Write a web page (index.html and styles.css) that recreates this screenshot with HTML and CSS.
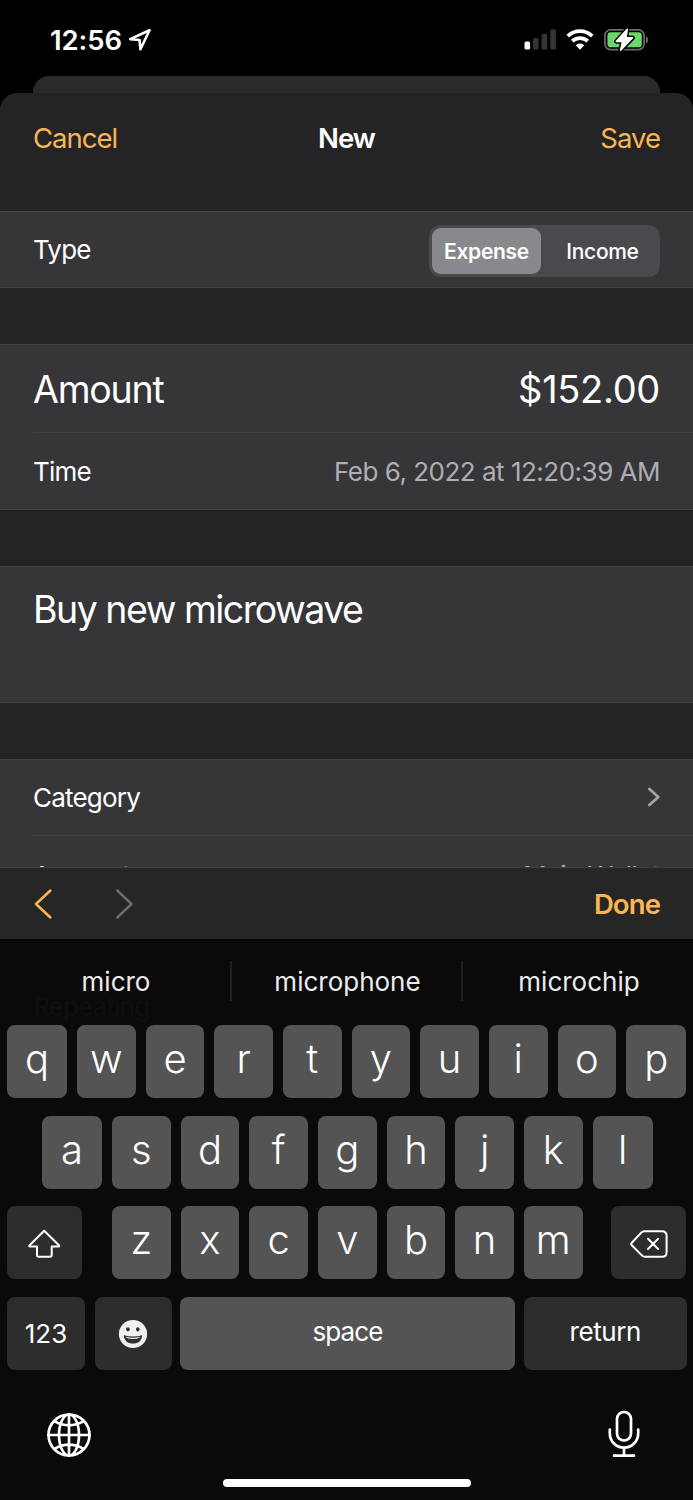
FILE: index.html
```
<!doctype html>
<html lang="en">
<head>
  <meta charset="UTF-8">
  <meta name="viewport" content="width=device-width, initial-scale=1">
  <title>New</title>
  <link rel="stylesheet" href="styles.css">
</head>
<body>
  <header class="status">
    <span class="clock">12:56</span>
    <svg class="location" width="24" height="24" viewBox="0 0 24 24"><path d="M21.5 2.2 2.2 11.1 11.6 12 12.4 21.3Z"/></svg>
    <svg class="signal" width="32" height="22" viewBox="0 0 32 22">
      <rect class="on" x="0.5" y="12.5" width="5.6" height="8"/>
      <rect x="9" y="9" width="5.6" height="11.5"/>
      <rect x="17.6" y="4.7" width="5.6" height="15.8"/>
      <rect x="26.3" y="0.3" width="5.6" height="20.2"/>
    </svg>
    <svg class="wifi" width="28" height="22" viewBox="0 0 28 22">
      <path d="M1.8 7.2a17.4 17.4 0 0 1 24.4 0"/>
      <path d="M6.3 12.2a11 11 0 0 1 15.4 0"/>
      <path class="dot" d="M9.7 16.3a6.2 6.2 0 0 1 8.6 0L14 20.7Z"/>
    </svg>
    <svg class="battery" width="45" height="24" viewBox="0 0 45 24">
      <rect class="shell" x="0.9" y="1.9" width="39.2" height="19.7" rx="5.6"/>
      <path class="cap" d="M42 8.3c2.8 1 2.8 6.2 0 7.2Z"/>
      <rect class="charge" x="3.4" y="4.3" width="34.4" height="15" rx="3.4"/>
      <path class="edge" d="M23.2 1.2 12.4 13.4H18.6L16.6 22.2 28.6 9.8H22Z"/>
      <path class="bolt" d="M23.2 1.2 12.4 13.4H18.6L16.6 22.2 28.6 9.8H22Z"/>
    </svg>
  </header>

  <div class="backcard"></div>

  <main class="sheet">
    <nav class="bar">
      <span class="link cancel">Cancel</span>
      <span class="title">New</span>
      <span class="link save">Save</span>
    </nav>

    <section class="group">
      <div class="row">
        <span class="label">Type</span>
        <div class="segment">
          <span class="item active">Expense</span>
          <span class="item">Income</span>
        </div>
      </div>
    </section>

    <section class="group">
      <div class="row big">
        <span class="amount">Amount</span>
        <span class="money">$152.00</span>
      </div>
      <div class="row line">
        <span class="label">Time</span>
        <span class="value">Feb 6, 2022 at 12:20:39 AM</span>
      </div>
    </section>

    <section class="group">
      <p class="note">Buy new microwave</p>
    </section>

    <section class="group last">
      <div class="row">
        <span class="label">Category</span>
        <svg class="chevron" width="14" height="20" viewBox="0 0 14 20"><path d="M3.4 2 12.3 10 3.4 18"/></svg>
      </div>
      <div class="row line account">
        <span class="label">Account</span>
        <span class="value">Main Wallet</span>
      </div>
    </section>
  </main>

  <div class="tools">
    <svg class="prev" width="20" height="32" viewBox="0 0 20 32"><path d="M17.4 2.5 3 16 17.4 29.5"/></svg>
    <svg class="next" width="20" height="32" viewBox="0 0 20 32"><path d="M3.2 2.5 17.5 16 3.2 29.5"/></svg>
    <span class="done">Done</span>
  </div>

  <footer class="keyboard">
    <!-- row of the form that shines through the keyboard -->
    <div class="ghost"><span>Repeating</span><i></i></div>

    <div class="words">
      <span>micro</span>
      <span>microphone</span>
      <span>microchip</span>
    </div>

    <div class="keys row1">
      <b>q</b><b>w</b><b>e</b><b>r</b><b>t</b><b>y</b><b>u</b><b>i</b><b>o</b><b>p</b>
    </div>
    <div class="keys row2">
      <b>a</b><b>s</b><b>d</b><b>f</b><b>g</b><b>h</b><b>j</b><b>k</b><b>l</b>
    </div>
    <div class="keys row3">
      <b class="dark shift">
        <svg width="34" height="30" viewBox="0 0 34 30"><path d="M16.2 1.8 1.6 16.2c-.7.8-.4 1.3.5 1.3H9V26q0 1.7 1.7 1.7H22q1.7 0 1.7-1.7V17.5h6.7c1 0 1.3-.5.5-1.3Z"/></svg>
      </b>
      <b>z</b><b>x</b><b>c</b><b>v</b><b>b</b><b>n</b><b class="lastkey">m</b>
      <b class="dark delete">
        <svg width="38" height="28" viewBox="0 0 38 28"><path d="M14.1 1.2H32q4.6 0 4.6 4.6V22.2q0 4.6-4.6 4.6H15q-1.7 0-2.9-1.2L1.8 15.3q-1.3-1.3 0-2.6L11.5 2.4q.9-1.2 2.6-1.2M18 8.8 28.2 19M28.2 8.8 18 19"/></svg>
      </b>
    </div>
    <div class="keys row4">
      <b class="dark text">123</b>
      <b class="dark emoji">
        <svg width="30" height="30" viewBox="0 0 30 30">
          <circle class="face" cx="15" cy="15" r="14.1"/>
          <ellipse cx="10" cy="10.3" rx="1.8" ry="2.1"/>
          <ellipse cx="19.8" cy="10.3" rx="1.8" ry="2.1"/>
          <path d="M5.9 16.2Q15 18.8 24.1 16.2C24 21.5 20 24.6 15 24.6S6 21.5 5.9 16.2Z"/>
          <path class="face" d="M7.6 17.8Q15 19.7 22.4 17.8C21.3 20.8 8.7 20.8 7.6 17.8Z"/>
        </svg>
      </b>
      <b class="text space">space</b>
      <b class="dark text return">return</b>
    </div>

    <div class="bottom">
      <svg class="globe" width="46" height="46" viewBox="0 0 46 46">
        <circle cx="23" cy="23" r="20.5"/>
        <ellipse cx="23" cy="23" rx="10" ry="20.5"/>
        <path d="M23 2.5V43.5M2.5 23H43.5M8.3 9.2Q23 17.6 37.7 9.2M8.3 36.8Q23 28.4 37.7 36.8"/>
      </svg>
      <svg class="mic" width="32" height="48" viewBox="0 0 32 48">
        <rect x="9" y="2" width="14" height="28.5" rx="7"/>
        <path d="M1.8 19.5V23.5a14.2 14.2 0 0 0 28.4 0V19.5M16 37.7V45.5M6 45.7H26"/>
      </svg>
    </div>
    <div class="home"></div>
  </footer>
</body>
</html>
```

FILE: styles.css
```
*{
  box-sizing: border-box;
  margin: 0;
  padding: 0;
}
body{
  width: 693px;
  height: 1500px;
  overflow: hidden;
  background: #000;
  color: #fff;
  font-family: Inter, "Liberation Sans", sans-serif;
  font-size: 26px;
}
svg{
  display: block;
  fill: none;
  stroke-linecap: round;
  stroke-linejoin: round;
}

/* status bar */
.status{
  height: 76px;
  display: flex;
  align-items: center;
  padding: 3px 44px 0 50px;
}
.clock{
  font-size: 27.5px;
  font-weight: 600;
  letter-spacing: -0.1px;
}
.location{
  margin-left: 6px;
  stroke: #fff;
  stroke-width: 2.6;
}
.signal{
  margin-left: auto;
  fill: #343434;
}
.signal rect{
  rx: 1.6px;
}
.signal .on{
  fill: #fff;
}
.wifi{
  margin-left: 10px;
  stroke: #fff;
  stroke-width: 3.8;
  stroke-linecap: butt;
}
.wifi .dot{
  fill: #fff;
  stroke: none;
}
.battery{
  margin-left: 10px;
}
.shell{
  stroke: #6b6b6b;
  stroke-width: 1.7;
}
.cap{
  fill: #6b6b6b;
}
.charge{
  fill: #6bd669;
}
.edge{
  stroke: #000;
  stroke-width: 4.6;
}
.bolt{
  fill: #fff;
  stroke: #fff;
  stroke-width: 1.6;
}

/* sheet */
.backcard{
  height: 17px;
  margin: 0 33px;
  border-radius: 16px 16px 0 0;
  background: #2a2a2c;
}
.sheet{
  height: 774px;
  overflow: hidden;
  border-radius: 17px 17px 0 0;
  background: #242426;
}
.bar{
  height: 118px;
  display: grid;
  grid-template-columns: 1fr 1fr 1fr;
  padding: 28px 33px 0;
  font-size: 27.5px;
  line-height: 34px;
  letter-spacing: -1px;
}
.link{
  color: #f9b653;
}
.title{
  text-align: center;
  font-weight: 600;
}
.save{
  text-align: right;
}
.group{
  margin-bottom: 56px;
  border-top: 1px solid #424244;
  border-bottom: 1px solid #424244;
  background: #363638;
}
.row{
  height: 75px;
  display: flex;
  align-items: center;
  justify-content: space-between;
  padding-right: 33px;
  margin-left: 33px;
}
.line{
  height: 77px;
  border-top: 1px solid #3f3f41;
}
.account{
  height: 79px;
}
.big{
  height: 87px;
}
.label{
  letter-spacing: -0.8px;
}
.amount{
  padding-top: 2px;
  font-size: 37.5px;
  letter-spacing: -1.2px;
}
.money{
  font-size: 38px;
  letter-spacing: -0.3px;
}
.value{
  color: #aeaeb4;
  letter-spacing: -0.5px;
}
.segment{
  width: 231px;
  height: 52px;
  display: grid;
  grid-template-columns: 109px 1fr;
  padding: 3px;
  margin-top: 2px;
  border-radius: 12px;
  background: #4a4a4e;
  font-size: 21px;
  letter-spacing: -0.3px;
}
.item{
  display: flex;
  align-items: center;
  justify-content: center;
  padding-left: 7px;
  padding-top: 1px;
  border-radius: 9px;
  font-weight: 500;
}
.active{
  padding-left: 0;
  background: #89888d;
  font-weight: 600;
}
.note{
  height: 135px;
  padding: 19px 33px;
  font-size: 37.5px;
  line-height: 48px;
  letter-spacing: -1.5px;
}
.chevron{
  margin-bottom: 2px;
  stroke: #a3a3a7;
  stroke-width: 2.8;
}

/* toolbar above keyboard */
.tools{
  height: 72px;
  display: flex;
  align-items: center;
  padding: 0 33px;
  border-top: 1px solid #3e3e40;
  background: #262626;
}
.prev{
  stroke: #f9b653;
  stroke-width: 2.5;
}
.next{
  margin-left: 61px;
  stroke: #6b6b6b;
  stroke-width: 2.5;
}
.done{
  margin-left: auto;
  color: #f9b653;
  font-size: 27.5px;
  font-weight: 600;
  letter-spacing: -0.9px;
}

/* keyboard */
.keyboard{
  position: relative;
  height: 561px;
  background: #0a0a0a;
}
.ghost{
  position: absolute;
  top: 45px;
  left: 33px;
  right: 33px;
  display: flex;
  align-items: center;
  justify-content: space-between;
  color: #0f0f0f;
  letter-spacing: -0.8px;
}
.ghost i{
  width: 80px;
  height: 44px;
  border-radius: 22px;
  background: #0b0b0b;
}
.words{
  position: relative;
  height: 86px;
  display: grid;
  grid-template-columns: 230px 231px 232px;
  padding: 22px 0 24px;
  color: #ececec;
}
.words span{
  display: flex;
  align-items: center;
  justify-content: center;
  padding-left: 2px;
}
.words span + span{
  border-left: 2px solid #202020;
}
.keys{
  position: relative;
  display: grid;
  column-gap: 9.97px;
  height: 73px;
  margin: 0 6.5px 17.7px 7px;
}
.row1{
  grid-template-columns: 60px repeat(8, 58.7px) 60px;
}
.row2{
  grid-template-columns: 60px repeat(7, 58.7px) 60px;
  margin-left: 42px;
}
.row3{
  grid-template-columns: 95px repeat(6, 58.7px) 77px 75.5px;
}
.row4{
  grid-template-columns: 78px 77px 335px 162.5px;
  column-gap: 9px;
}
.keys b{
  display: flex;
  align-items: center;
  justify-content: center;
  padding-bottom: 6px;
  border-radius: 8px;
  background: #545454;
  font-size: 40px;
  font-weight: 300;
}
.keys .dark{
  padding-bottom: 0;
  background: #2d2d2d;
}
.keys .text{
  font-size: 26px;
  font-weight: 400;
}
.keys .shift{
  width: 75px;
}
.keys .lastkey{
  width: 58.7px;
}
.keys .emoji{
  margin: 0 -0.5px 0 1px;
}
.keys .space{
  padding-bottom: 5px;
  letter-spacing: -0.9px;
}
.keys .return{
  padding-bottom: 4px;
  letter-spacing: -0.4px;
}
.emoji .face{
  fill: #f0f0f0;
}
.emoji svg{
  fill: #2d2d2d;
}
.shift svg,
.delete svg{
  margin-top: 2px;
  stroke: #fff;
  stroke-width: 2;
}
.bottom{
  display: flex;
  align-items: center;
  justify-content: space-between;
  padding: 22px 53px 0 46px;
}
.bottom svg{
  stroke: #fff;
  stroke-width: 2.7;
}
.globe{
  margin-top: 2px;
}
.home{
  width: 248px;
  height: 8px;
  margin: 21px auto 0;
  border-radius: 4px;
  background: #fff;
}
```
